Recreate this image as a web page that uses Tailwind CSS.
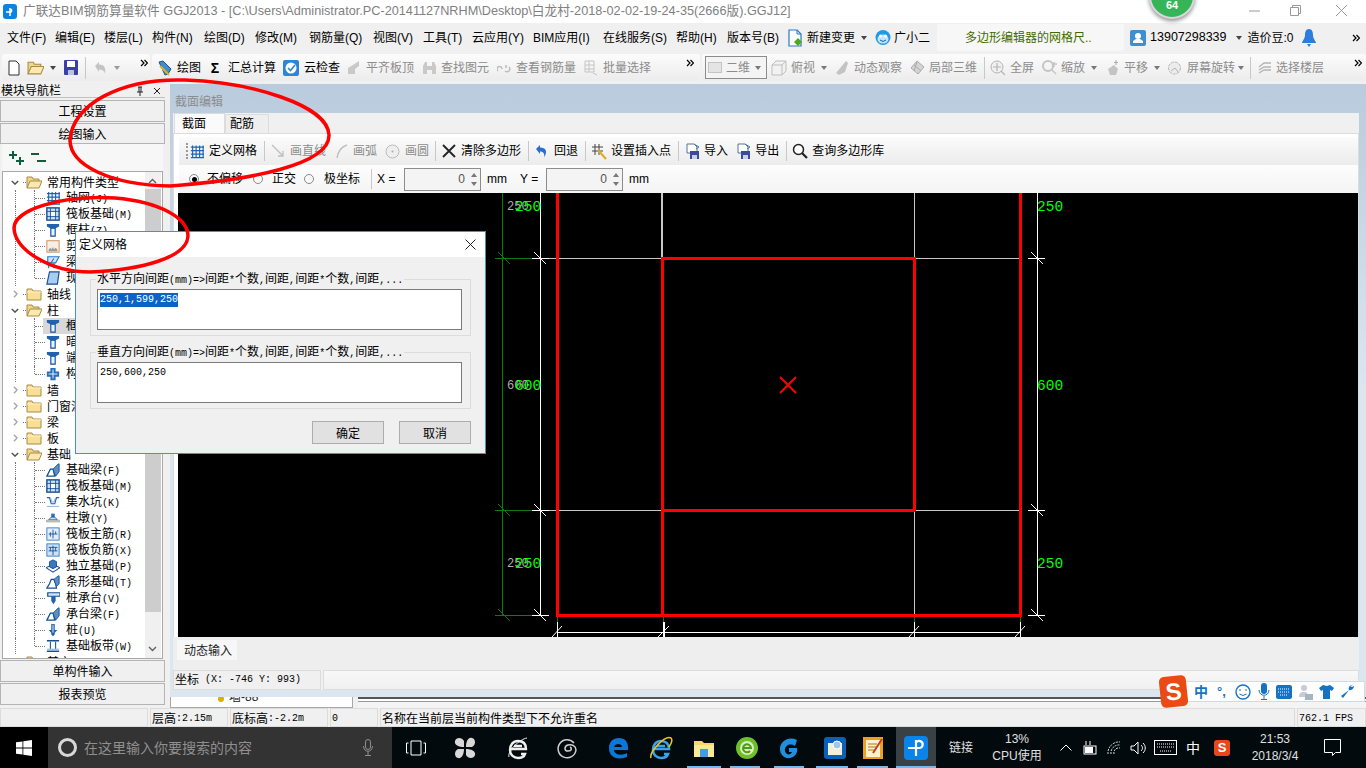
<!DOCTYPE html>
<html lang="zh-CN">
<head>
  <meta charset="UTF-8" />
  <title>广联达BIM钢筋算量软件 GGJ2013</title>
  <script src="https://cdn.jsdelivr.net/npm/@tailwindcss/browser@4"></script>
</head>
<body class="bg-[#f0f0f0] text-black text-[12px] leading-none [font-family:'Liberation_Sans','Noto_Sans_CJK_SC',sans-serif]">

  <!-- shared icons -->
  <svg class="hidden">
    <symbol id="i-grid" viewBox="0 0 16 16"><path d="M3 1v14M7 1v14M11 1v14M15 1v14M1 3h15M1 7h15M1 11h15M1 15h15" stroke="#1f62b0" stroke-width="1.3" fill="none"/></symbol>
    <symbol id="i-raft" viewBox="0 0 16 16"><rect x="1" y="1" width="14" height="14" fill="#cfe0f3" stroke="#134f96" stroke-width="1.6"/><rect x="5" y="5" width="6" height="6" fill="#fff" stroke="#134f96"/><path d="M5 1v4M11 1v4M5 11v4M11 11v4M1 5h4M1 11h4M11 5h4M11 11h4" stroke="#134f96"/></symbol>
    <symbol id="i-col" viewBox="0 0 16 16"><path d="M1 1h14v3l-4 2H5L1 4z" fill="#1f62b0"/><path d="M5.5 6h5v9h-5z" fill="#e6f0fa" stroke="#134f96" stroke-width="1.3"/></symbol>
    <symbol id="i-shear" viewBox="0 0 16 16"><rect x="1" y="2" width="14" height="13" fill="#f6efe6" stroke="#c9864a"/><path d="M3 12l2-2 1 2 2-3 1 3 2-2 2 2v2H3z" fill="#9a9a9a"/></symbol>
    <symbol id="i-beam" viewBox="0 0 16 16"><path d="M2 2h13l-4 7H2z" fill="#cfe3f6" stroke="#2a78c2" stroke-width="1.3"/><path d="M3 9v6M9 9v6M3 13l6-9" stroke="#2a78c2" stroke-width="1.3" fill="none"/></symbol>
    <symbol id="i-slab" viewBox="0 0 16 16"><path d="M4 1h11l-2 14H1z" fill="#a9cdf0" stroke="#134f96" stroke-width="1.3"/></symbol>
    <symbol id="i-ctor" viewBox="0 0 16 16"><path d="M5 1h6v4h4v6h-4v4H5v-4H1V5h4z" fill="#2a6fbe"/><path d="M8 3v10M3 8h10" stroke="#fff"/></symbol>
    <symbol id="i-fbeam" viewBox="0 0 16 16"><path d="M1 15l4-8h3l2 8z" fill="#fff" stroke="#134f96" stroke-width="1.4"/><path d="M8 7l6-6h1v9l-4 5z" fill="#5b8fc8" stroke="#134f96"/></symbol>
    <symbol id="i-pit" viewBox="0 0 16 16"><path d="M1 3h3l2 7h4l2-7h3" fill="none" stroke="#1f62b0" stroke-width="1.3"/><path d="M1 13h14M5 3l2 5h2l2-5" stroke="#7aa7d8" fill="none"/></symbol>
    <symbol id="i-pier" viewBox="0 0 16 16"><path d="M6 3h4v4H6z" fill="#2a6fbe"/><path d="M3 10l3-3h4l3 3z" fill="#cfe0f3" stroke="#134f96"/><rect x="0" y="10" width="16" height="3" fill="#b8b8b8"/></symbol>
    <symbol id="i-main" viewBox="0 0 16 16"><rect x="1" y="1" width="14" height="14" fill="#e3eefa" stroke="#2a78c2"/><path d="M8 3v10M3 8h10M5 6v5M11 5v3" stroke="#134f96" fill="none"/></symbol>
    <symbol id="i-neg" viewBox="0 0 16 16"><rect x="1" y="1" width="14" height="14" fill="#cfe0f3" stroke="#2a78c2"/><path d="M3 5h10M3 9h10M8 3v11M5 5v4M11 5v4" stroke="#134f96" fill="none"/></symbol>
    <symbol id="i-ind" viewBox="0 0 16 16"><path d="M0 10l8-4 8 4-8 5z" fill="#fff" stroke="#134f96" stroke-width="1.2"/><path d="M4 3l4-2 4 2v6l-4 2-4-2z" fill="#3b78c0" stroke="#134f96"/></symbol>
    <symbol id="i-strip" viewBox="0 0 16 16"><path d="M1 15l3-5 2-5h3l2 5 1 5z" fill="#fff" stroke="#134f96" stroke-width="1.4"/><path d="M9 5l5-4h1v9l-3 3z" fill="#5b8fc8" stroke="#134f96"/></symbol>
    <symbol id="i-cap" viewBox="0 0 16 16"><path d="M2 2h14v4H2z" fill="#d5e4f4" stroke="#134f96" stroke-width="1.4"/><path d="M6 6h5v5l-2.500 4-2.500-4z" fill="#1f62b0"/></symbol>
    <symbol id="i-pile" viewBox="0 0 16 16"><path d="M6 1h4v7h3l-3 3v2l-2 2-2-2v-2L3 8h3z" fill="#1f62b0"/><path d="M8 2v9" stroke="#fff"/></symbol>
    <symbol id="i-band" viewBox="0 0 16 16"><path d="M1 2h14M1 14h14" stroke="#134f96" stroke-width="1.6"/><path d="M5 3v9M11 3v9" stroke="#134f96" stroke-width="1.2"/><path d="M1 11h14v2H1z" fill="#9cc0e6"/></symbol>
    <symbol id="i-dopen" viewBox="0 0 16 14"><path d="M1 13V2h5l1 2h6v2" fill="#f0d58a" stroke="#a98b46"/><path d="M1 13l3-7h12l-3 7z" fill="#fbe9b0" stroke="#a98b46"/></symbol>
    <symbol id="i-dclosed" viewBox="0 0 16 14"><path d="M1 13V2h5l1 2h8v9z" fill="#f9df93" stroke="#a98b46"/><path d="M1 5h14" stroke="#fff4cf"/></symbol>
    <symbol id="i-more" viewBox="0 0 8 8"><path d="M1 1l3 3-3 3M4.500 1l3 3-3 3" stroke="#000" fill="none" stroke-width="1.200"/></symbol>
    <symbol id="i-down" viewBox="0 0 6 4"><path d="M0 0h6L3 4z" fill="#444"/></symbol>
    <symbol id="i-disk" viewBox="0 0 16 16"><path d="M3 1h7l3 3v6H3z" fill="#fff" stroke="#56739a"/><path d="M10 1l5 3-3 2" stroke="#4478b0" fill="none"/><rect x="6" y="8" width="9" height="8" fill="#3b4a9c"/><rect x="8" y="12" width="5" height="4" fill="#c8d2e6"/></symbol>
  </svg>

  <div class="relative w-[1366px] h-[768px] overflow-hidden flex flex-col">

    <!-- title bar -->
    <div class="h-[23px] bg-white flex items-center relative">
      <div class="ml-[3px] w-[14px] h-[15px] rounded-[3px] bg-[#0a84e0] flex items-center justify-center">
        <svg class="w-[10px] h-[10px]" viewBox="0 0 10 10"><path d="M5 1v8M1 5h5a2 2 0 0 0 0-3" stroke="#fff" stroke-width="1.500" fill="none"/></svg>
      </div>
      <span class="ml-[6px] text-[12.700px] text-[#808080] whitespace-nowrap">广联达BIM钢筋算量软件 GGJ2013 - [C:\Users\Administrator.PC-20141127NRHM\Desktop\白龙村-2018-02-02-19-24-35(2666版).GGJ12]</span>
      <svg class="absolute left-[1249px] top-[10px] w-[11px] h-[2px]" viewBox="0 0 11 2"><path d="M0 1h11" stroke="#999"/></svg>
      <svg class="absolute left-[1290px] top-[5px] w-[11px] h-[11px]" viewBox="0 0 11 11"><path d="M.5 2.500h8v8h-8zM2.500 2.500v-2h8v8h-2" stroke="#999" fill="none"/></svg>
      <svg class="absolute left-[1336px] top-[5px] w-[11px] h-[11px]" viewBox="0 0 11 11"><path d="M0 0l11 11M11 0L0 11" stroke="#999"/></svg>
    </div>

    <!-- menu bar -->
    <div class="h-[29px] bg-[#f0f0f0] flex items-center whitespace-nowrap pl-[7px]">
      <span class="w-[48px]">文件(F)</span><span class="w-[49px]">编辑(E)</span><span class="w-[48px]">楼层(L)</span><span class="w-[52px]">构件(N)</span><span class="w-[51px]">绘图(D)</span><span class="w-[54px]">修改(M)</span><span class="w-[64px]">钢筋量(Q)</span><span class="w-[50px]">视图(V)</span><span class="w-[49px]">工具(T)</span><span class="w-[61px]">云应用(Y)</span><span class="w-[70px]">BIM应用(I)</span><span class="w-[73px]">在线服务(S)</span><span class="w-[51px]">帮助(H)</span><span class="w-[60px]">版本号(B)</span>
      <svg class="w-4 h-[18px]" viewBox="0 0 16 18"><path d="M2 1h8l4 4v12H2z" fill="#fff" stroke="#2a78c2" stroke-width="1.200"/><path d="M10 1v4h4" fill="none" stroke="#2a78c2"/><path d="M11 9l4 4-4 4-4-4z" fill="#4ea81f"/></svg>
      <span class="ml-1">新建变更</span>
      <svg class="ml-[6px] w-[6px] h-1"><use href="#i-down"/></svg>
      <svg class="ml-2 w-4 h-4" viewBox="0 0 16 16"><circle cx="8" cy="7.500" r="7.500" fill="#1e9be8"/><ellipse cx="8" cy="9" rx="5.500" ry="4.500" fill="#bfe6fb"/><circle cx="5.500" cy="6" r="1.500" fill="#fff"/><circle cx="10.500" cy="6" r="1.500" fill="#fff"/><path d="M5 10q3 3 6 0" stroke="#0a5fa8" fill="none"/></svg>
      <span class="ml-[3px]">广小二</span>
      <div class="ml-[7px] w-[187px] h-[27px] bg-[#f7f7f7] rounded-[3px] flex items-center pl-[28px] text-[#3f6b00]">多边形编辑器的网格尺..</div>
      <svg class="ml-[6px] w-4 h-4" viewBox="0 0 16 16"><rect width="16" height="16" rx="2" fill="#3c8fd0"/><circle cx="8" cy="6" r="3" fill="#fff"/><path d="M3 13h10v-2l-3-2H6l-3 2z" fill="#fff"/></svg>
      <span class="ml-1 text-[12.500px]">13907298339</span>
      <svg class="ml-[9px] w-[6px] h-1"><use href="#i-down"/></svg>
      <span class="ml-[6px]">造价豆:0</span>
      <svg class="ml-[8px] w-[14px] h-[18px]" viewBox="0 0 14 18"><path d="M7 0c3 0 4 3 4 6 0 4 3 6 3 8H0c0-2 3-4 3-8 0-3 1-6 4-6z" fill="#2b7de0"/><path d="M5 15h4l-2 3z" fill="#2b7de0"/></svg>
      <svg class="ml-[36px] w-2 h-2"><use href="#i-more"/></svg>
    </div>

    <!-- toolbars -->
    <div class="h-[32px] bg-[#f0f0f0] flex items-start pt-[2px] whitespace-nowrap">
      <div class="ml-[2px] w-[148px] h-[27px] flex items-center bg-gradient-to-b from-[#fcfcfc] to-[#ececec] rounded-[3px]">
        <svg class="ml-[5px] w-[14px] h-[16px]" viewBox="0 0 14 16"><path d="M2 1h7l3 3v11H2z" fill="#fff" stroke="#333"/></svg>
        <svg class="ml-[6px] w-[17px] h-[15px]"><use href="#i-dopen"/></svg>
        <svg class="ml-[6px] w-[6px] h-1"><use href="#i-down"/></svg>
        <svg class="ml-2 w-[14px] h-[15px]" viewBox="0 0 14 15"><rect width="14" height="15" rx="1" fill="#3a3fa8"/><rect x="3" y="1" width="8" height="6" fill="#fff"/><rect x="4" y="10" width="6" height="5" fill="#b8c4e0"/></svg>
        <div class="ml-[7px] w-px h-[22px] bg-[#c8c8c8]"></div>
        <svg class="ml-[7px] w-[14px] h-[15px]" viewBox="0 0 14 15"><path d="M2 6l4-4v2.500c5 0 7 3 6 9-1-3-3-4-6-4V12z" fill="#c4c4c4"/></svg>
        <svg class="ml-[7px] w-[6px] h-1 opacity-50"><use href="#i-down"/></svg>
        <svg class="ml-[20px] -mt-[10px] w-2 h-2"><use href="#i-more"/></svg>
      </div>
      <div class="ml-[2px] w-[548px] h-[27px] flex items-center bg-gradient-to-b from-[#fcfcfc] to-[#ececec] rounded-[3px]">
        <svg class="ml-[6px] w-[14px] h-[16px]" viewBox="0 0 14 16"><path d="M1 2l4-1 8 8-3 5-3 1z" fill="#3c8fd0" stroke="#1c4f8c"/><path d="M2 6l9 9" stroke="#e8b020" stroke-width="2"/></svg>
        <span class="ml-[5px]">绘图</span>
        <span class="ml-[7px] w-[14px] text-center text-[14px] font-bold">Σ</span>
        <span class="ml-[6px]">汇总计算</span>
        <svg class="ml-[7px] w-4 h-4" viewBox="0 0 16 16"><rect width="16" height="16" rx="2" fill="#2a86d6"/><circle cx="8" cy="8" r="5.500" fill="#fff"/><path d="M5 8l2.500 2.500L12 5" stroke="#2a86d6" stroke-width="1.600" fill="none"/></svg>
        <span class="ml-[5px]">云检查</span>
        <svg class="ml-[7px] w-[14px] h-[16px]" viewBox="0 0 14 16"><path d="M1 14V8l5-3 6-4v5l-4 3v5z" fill="#c9c9c9"/></svg>
        <span class="ml-[5px] text-[#8c8c8c]">平齐板顶</span>
        <svg class="ml-2 w-[15px] h-[14px]" viewBox="0 0 15 14"><path d="M1 13V5l2-4h2v12zM14 13V5l-2-4h-2v12zM5 5h5v4H5z" fill="#c9c9c9"/></svg>
        <span class="ml-1 text-[#8c8c8c]">查找图元</span>
        <svg class="ml-2 w-[14px] h-[10px]" viewBox="0 0 14 10"><path d="M1 8a2.500 2.500 0 1 1 4-2M9 2v3m-1 3a2.500 2.500 0 1 0 4-4" stroke="#bdbdbd" stroke-width="1.500" fill="none"/></svg>
        <span class="ml-[5px] text-[#8c8c8c]">查看钢筋量</span>
        <svg class="ml-2 w-[14px] h-[16px]" viewBox="0 0 14 16"><path d="M1 1h9v11H1zM1 5h9M1 9h9M5 1v11M9 13l4 2" stroke="#c4c4c4" fill="none"/></svg>
        <span class="ml-[5px] text-[#8c8c8c]">批量选择</span>
        <svg class="ml-[35px] -mt-[10px] w-2 h-2"><use href="#i-more"/></svg>
      </div>
      <div class="ml-[2px] w-[664px] h-[27px] flex items-center bg-gradient-to-b from-[#fcfcfc] to-[#ececec] rounded-[3px]">
        <div class="ml-[3px] w-[62px] h-[23px] border border-[#8c8c8c] flex items-center bg-[#f4f4f4]">
          <span class="ml-[2px] w-[14px] h-[11px] bg-[#e4e4e4] border border-[#c4c4c4]"></span>
          <span class="ml-[4px] text-[#8c8c8c]">二维</span>
          <svg class="ml-[5px] w-[6px] h-1 opacity-70"><use href="#i-down"/></svg>
        </div>
        <svg class="ml-1 w-4 h-4" viewBox="0 0 16 16"><path d="M1 5l4-4h10v10l-4 4H1zM1 5h10v10M11 5l4-4" stroke="#bdbdbd" fill="#f2f2f2"/></svg>
        <span class="ml-1 text-[#8c8c8c]">俯视</span>
        <svg class="ml-[6px] w-[6px] h-1 opacity-70"><use href="#i-down"/></svg>
        <svg class="ml-2 w-[14px] h-4" viewBox="0 0 14 16"><path d="M1 13L11 1l2 2-3 9-6 3z" fill="#c4c4c4"/></svg>
        <span class="ml-[5px] text-[#8c8c8c]">动态观察</span>
        <svg class="ml-2 w-[15px] h-[15px]" viewBox="0 0 15 15"><path d="M1 8l6-7 7 6-6 7z" fill="#d4d4d4" stroke="#aaa"/><path d="M4 5l7 6M7 2l-3 9" stroke="#aaa"/></svg>
        <span class="ml-1 text-[#8c8c8c]">局部三维</span>
        <div class="ml-[7px] w-px h-[22px] bg-[#c8c8c8]"></div>
        <svg class="ml-[5px] w-4 h-4" viewBox="0 0 16 16"><circle cx="7" cy="7" r="6" fill="#f0f0f0" stroke="#b4b4b4"/><path d="M7 3v8M3 7h8M11 11l4 4" stroke="#b4b4b4" stroke-width="1.200"/></svg>
        <span class="ml-1 text-[#8c8c8c]">全屏</span>
        <svg class="ml-2 w-[15px] h-[15px]" viewBox="0 0 15 15"><circle cx="6" cy="6" r="5" fill="none" stroke="#c4c4c4" stroke-width="2"/><path d="M10 10l4 4M12 2v5M10 4h5" stroke="#c4c4c4" stroke-width="1.400"/></svg>
        <span class="ml-1 text-[#8c8c8c]">缩放</span>
        <svg class="ml-[6px] w-[6px] h-1 opacity-70"><use href="#i-down"/></svg>
        <svg class="ml-2 w-[15px] h-4" viewBox="0 0 15 16"><path d="M3 9l6-4 4 4-2 6H5z" fill="#c4c4c4"/><path d="M11 0v5M9 2.500h4" stroke="#aaa"/></svg>
        <span class="ml-1 text-[#8c8c8c]">平移</span>
        <svg class="ml-[6px] w-[6px] h-1 opacity-70"><use href="#i-down"/></svg>
        <svg class="ml-[7px] w-[15px] h-4" viewBox="0 0 15 16"><circle cx="7.500" cy="8" r="6" fill="#ececec" stroke="#b4b4b4" stroke-dasharray="3 1"/><path d="M4 11l4-3 3 4" stroke="#b4b4b4" fill="none"/></svg>
        <span class="ml-[5px] text-[#8c8c8c]">屏幕旋转</span>
        <svg class="ml-[3px] w-[6px] h-1 opacity-70"><use href="#i-down"/></svg>
        <div class="ml-[6px] w-px h-[22px] bg-[#c8c8c8]"></div>
        <svg class="ml-[7px] w-[14px] h-[14px]" viewBox="0 0 14 14"><path d="M1 6l5-4h7M1 9l5-3h7M1 12l5-3h7" stroke="#b4b4b4" stroke-width="1.400" fill="none"/></svg>
        <span class="ml-1 text-[#8c8c8c]">选择楼层</span>
        <svg class="ml-[30px] -mt-[10px] w-2 h-2"><use href="#i-more"/></svg>
      </div>
    </div>

    <!-- main -->
    <div class="h-[624px] flex">

      <!-- module navigation -->
      <div class="w-[165px] shrink-0 flex flex-col bg-[#f0f0f0]">
        <div class="h-[14px] flex items-center justify-between pr-[4px] border-b border-[#c0c0c0] text-[12px]">
          <span class="pl-px">模块导航栏</span>
          <span class="flex items-center gap-[8px]">
            <svg class="w-[10px] h-[10px]" viewBox="0 0 10 10"><path d="M3 1h4M4 1v5M6 1v5M2 6h6M5 6v4" stroke="#222" fill="none"/></svg>
            <svg class="w-[8px] h-[8px]" viewBox="0 0 8 8"><path d="M1 1l6 6M7 1L1 7" stroke="#222"/></svg>
          </span>
        </div>
        <div class="mt-[2px] h-[22px] border border-[#b4b4b4] flex items-center justify-center pt-[2px]">工程设置</div>
        <div class="mt-px h-[21px] border border-[#b4b4b4] flex items-center justify-center pt-[2px]">绘图输入</div>
        <div class="mx-[2px] h-[27px] bg-[#f7f7f7] flex items-center">
          <svg class="ml-[6px] w-[16px] h-[14px]" viewBox="0 0 16 14"><path d="M4 0h2v3h3v2H6v3H4V5H1V3h3zM11 6h2v3h3v2h-3v3h-2v-3H8V9h3z" fill="#0f5f3c"/></svg>
          <svg class="ml-[6px] w-[16px] h-[11px]" viewBox="0 0 16 11"><path d="M1 1h8v2H1zM7 8h9v2H7z" fill="#0f5f3c"/></svg>
        </div>
        <div class="relative mx-[2px] h-[488px] border border-[#a8a8a8] bg-white overflow-hidden">
          <div id="tree" class="pt-[2px]"></div>
          <div class="absolute right-px top-0 bottom-0 w-[16px] bg-[#f0f0f0]">
            <svg class="absolute left-[3px] top-[6px] w-[9px] h-[6px]" viewBox="0 0 9 6"><path d="M1 5l3.500-3.500L8 5" stroke="#606060" stroke-width="1.400" fill="none"/></svg>
            <div class="absolute left-0 right-0 top-[17px] h-[423px] bg-[#cdcdcd]"></div>
            <svg class="absolute left-[3px] bottom-[6px] w-[9px] h-[6px]" viewBox="0 0 9 6"><path d="M1 1l3.500 3.500L8 1" stroke="#606060" stroke-width="1.400" fill="none"/></svg>
          </div>
        </div>
        <div class="mt-px h-[22px] border border-[#b4b4b4] flex items-center justify-center pt-px">单构件输入</div>
        <div class="mt-px h-[22px] border border-[#b4b4b4] flex items-center justify-center pt-px">报表预览</div>
      </div>

      <!-- section editor window -->
      <div class="flex-1 flex flex-col">
        <div class="ml-[5px] h-[613px] flex flex-col bg-gradient-to-b from-[#b9cbdd] via-[#dbe6f1] to-[#dbe6f1]">
          <div class="h-[29px] flex items-center pl-[5px] pt-[6px] text-[#8c8c8c] shrink-0">截面编辑</div>
          <div class="ml-[3px] mr-[9px] h-[577px] bg-[#f0f0f0] flex flex-col shrink-0">
            <div class="h-[20px] flex items-end pl-px shrink-0">
              <div class="w-[51px] h-[20px] bg-[#fafafa] border border-b-0 border-[#dcdcdc] flex items-center pl-[7px]">截面</div>
              <div class="w-[44px] h-[19px] bg-[#eeeeee] border border-b-0 border-[#dcdcdc] flex items-center pl-[4px]">配筋</div>
            </div>
            <div class="h-[505px] bg-white border border-[#dcdcdc] pt-[3px] flex flex-col shrink-0">
              <!-- polygon tools -->
              <div class="h-[28px] flex items-center whitespace-nowrap bg-gradient-to-b from-[#fbfbfb] to-[#ececec] shrink-0 ml-[5px]">
                <span class="ml-[7px] h-[16px] w-[2px] border-l-2 border-dotted border-[#9a9a9a]"></span>
                <svg class="ml-[2px] w-[14px] h-[15px]"><use href="#i-grid"/></svg>
                <span class="ml-[5px]">定义网格</span>
                <div class="ml-[7px] w-px h-[20px] bg-[#c8c8c8]"></div>
                <svg class="ml-[6px] w-[14px] h-[14px]" viewBox="0 0 14 14"><path d="M1 1l11 11M12 7v5H7" stroke="#bdbdbd" stroke-width="1.300" fill="none"/></svg>
                <span class="ml-[5px] text-[#8c8c8c]">画直线</span>
                <svg class="ml-[9px] w-[13px] h-[15px]" viewBox="0 0 13 15"><path d="M2 14C3 7 6 3 12 1" stroke="#bdbdbd" stroke-width="1.400" fill="none"/></svg>
                <span class="ml-[5px] text-[#8c8c8c]">画弧</span>
                <svg class="ml-[8px] w-[15px] h-[15px]" viewBox="0 0 15 15"><circle cx="7.500" cy="7.500" r="6.500" fill="#eee" stroke="#bdbdbd"/><circle cx="7.500" cy="7.500" r="1" fill="#aaa"/></svg>
                <span class="ml-[5px] text-[#8c8c8c]">画圆</span>
                <div class="ml-[6px] w-px h-[20px] bg-[#c8c8c8]"></div>
                <svg class="ml-[6px] w-[14px] h-[14px]" viewBox="0 0 14 14"><path d="M1 1l12 12M13 1L1 13" stroke="#222" stroke-width="1.800"/></svg>
                <span class="ml-[5px]">清除多边形</span>
                <div class="ml-[7px] w-px h-[20px] bg-[#c8c8c8]"></div>
                <svg class="ml-[6px] w-[14px] h-[14px]" viewBox="0 0 14 14"><path d="M1 5l4-4v2.500c6 0 8 4 4 10 1-4-1-6-4-6V10z" fill="#2a6fd0"/></svg>
                <span class="ml-[5px]">回退</span>
                <div class="ml-[7px] w-px h-[20px] bg-[#c8c8c8]"></div>
                <svg class="ml-[5px] w-[16px] h-[17px]" viewBox="0 0 16 17"><path d="M4 1v11M8 1v11M1 4h11M1 8h11" stroke="#444" fill="none"/><path d="M7 7l8 9" stroke="#e2a820" stroke-width="2"/></svg>
                <span class="ml-[4px]">设置插入点</span>
                <div class="ml-[7px] w-px h-[20px] bg-[#c8c8c8]"></div>
                <svg class="ml-[5px] w-[16px] h-[16px]"><use href="#i-disk"/></svg>
                <span class="ml-[4px]">导入</span>
                <svg class="ml-[7px] w-[16px] h-[16px]"><use href="#i-disk"/></svg>
                <span class="ml-[4px]">导出</span>
                <div class="ml-[7px] w-px h-[20px] bg-[#c8c8c8]"></div>
                <svg class="ml-[5px] w-[16px] h-[16px]" viewBox="0 0 16 16"><circle cx="6.500" cy="6.500" r="5" fill="#fff" stroke="#222" stroke-width="1.500"/><path d="M10 10l5 5" stroke="#222" stroke-width="2.200"/></svg>
                <span class="ml-[4px]">查询多边形库</span>
              </div>
              <!-- offset mode row -->
              <div class="h-[28px] flex items-center whitespace-nowrap bg-gradient-to-b from-[#fdfdfd] to-[#f4f4f4] shrink-0 ml-[5px]">
                <span class="ml-[10px] w-[10px] h-[10px] rounded-full border border-[#8a8a8a] flex items-center justify-center"><span class="w-[5px] h-[5px] rounded-full bg-black"></span></span>
                <span class="ml-[8px]">不偏移</span>
                <span class="ml-[10px] w-[10px] h-[10px] rounded-full border border-[#8a8a8a]"></span>
                <span class="ml-[9px]">正交</span>
                <span class="ml-[8px] w-[10px] h-[10px] rounded-full border border-[#8a8a8a]"></span>
                <span class="ml-[10px]">极坐标</span>
                <div class="ml-[11px] w-px h-[20px] bg-[#c8c8c8]"></div>
                <span class="ml-[5px] w-[27px]">X =</span>
                <div class="w-[77px] h-[23px] border border-[#8c8c8c] bg-[#f4f4f4] flex items-center justify-end">
                  <span class="text-[#555]">0</span>
                  <span class="ml-[6px] mr-[3px] flex flex-col gap-[5px]">
                    <svg class="w-[6px] h-1 rotate-180 opacity-70"><use href="#i-down"/></svg>
                    <svg class="w-[6px] h-1 opacity-70"><use href="#i-down"/></svg>
                  </span>
                </div>
                <span class="ml-[6px]">mm</span>
                <span class="ml-[13px] w-[26px]">Y =</span>
                <div class="w-[77px] h-[23px] border border-[#8c8c8c] bg-[#f4f4f4] flex items-center justify-end">
                  <span class="text-[#555]">0</span>
                  <span class="ml-[6px] mr-[3px] flex flex-col gap-[5px]">
                    <svg class="w-[6px] h-1 rotate-180 opacity-70"><use href="#i-down"/></svg>
                    <svg class="w-[6px] h-1 opacity-70"><use href="#i-down"/></svg>
                  </span>
                </div>
                <span class="ml-[6px]">mm</span>
              </div>
              <!-- CAD canvas, viewBox uses page coordinates -->
              <svg class="ml-[4px] w-[1180px] h-[444px] bg-black shrink-0" viewBox="178 193 1180 444" shape-rendering="crispEdges">
                <path d="M502.500 193v422M495 258.500h38M495 510.500h38M495 615.500h38" stroke="#0c7a0c"/>
                <path d="M540.500 193v422M532 258.500h17M532 510.500h17M532 615.500h17M1037.500 193v422M1028 258.500h17M1028 510.500h17M1028 615.500h17M557 632.500h464" stroke="#fff"/>
                <path d="M549 258.500h473M549 510.500h473" stroke="#c8c8c8"/>
                <path d="M662 193v65" stroke="#c8c8c8" stroke-width="2"/>
                <path d="M914.500 193v65M914.500 510v105" stroke="#c8c8c8"/>
                <path d="M557.500 617v5M663.500 617v5M914.500 617v5M1020.500 617v5" stroke="#0c7a0c"/>
                <path d="M557.500 622v15M914.500 622v15M1020.500 622v15" stroke="#fff"/>
                <path d="M663.500 622v15" stroke="#fff" stroke-width="2"/>
                <g shape-rendering="auto" stroke="#fff" fill="none">
                  <path d="M534 252l12 12M534 504l12 12M534 609l12 12M1031 252l12 12M1031 504l12 12M1031 609l12 12"/>
                  <path d="M552 637l10-11M658 637l11-11M909 637l10-11M1015 637l10-11"/>
                  <path d="M498 252l12 12M498 504l12 12M498 609l12 12" stroke="#0c7a0c"/>
                </g>
                <path d="M557.500 193v422M1020.500 193v422M556 615.500h466M662.500 258.500h252M914 257v254M662.500 257v358M662 510.500h253" stroke="#ff0000" stroke-width="3" fill="none"/>
                <path d="M780 377l16 16M796 377l-16 16" stroke="#ff0000" stroke-width="2" fill="none" shape-rendering="auto"/>
                <g font-family="Liberation Mono, monospace" shape-rendering="auto">
                  <text x="507" y="210" font-size="12" fill="#b0b0b0">250</text>
                  <text x="507" y="389" font-size="12" fill="#b0b0b0">600</text>
                  <text x="507" y="567" font-size="12" fill="#b0b0b0">250</text>
                  <text x="515" y="211" font-size="14.500" fill="#00ff00">250</text>
                  <text x="515" y="390" font-size="14.500" fill="#00ff00">600</text>
                  <text x="515" y="568" font-size="14.500" fill="#00ff00">250</text>
                  <text x="1037" y="211" font-size="14.500" fill="#00ff00">250</text>
                  <text x="1037" y="390" font-size="14.500" fill="#00ff00">600</text>
                  <text x="1037" y="568" font-size="14.500" fill="#00ff00">250</text>
                </g>
              </svg>
            </div>
            <!-- dynamic input tab -->
            <div class="h-[33px] bg-[#eeeeee] shrink-0 pt-[3px] pl-[4px] relative -mt-px">
              <div class="w-[60px] h-[20px] bg-[#f7f7f7] flex items-center pl-[7px] pt-[2px] text-[#222]">动态输入</div>
            </div>
            <!-- coordinates -->
            <div class="h-[20px] flex shrink-0 bg-[#f0f0f0] gap-[2px]">
              <div class="w-[148px] border border-[#dcdcdc] flex items-center pl-px whitespace-nowrap">坐标<span class="[font-family:'Liberation_Mono',monospace] text-[10px]">&nbsp;(X:&nbsp;-746&nbsp;Y:&nbsp;993)</span></div>
              <div class="flex-1 border border-[#dcdcdc] bg-gradient-to-b from-[#f8f8f8] to-[#f0f0f0]"></div>
            </div>
          </div>
        </div>
        <!-- panels behind the window -->
        <div class="h-[11px] flex bg-[#f0f0f0]">
          <div class="ml-[5px] w-[183px] bg-white border-x border-b border-[#a8a8a8] flex items-start pl-[45px] overflow-hidden">
            <svg class="w-[10px] h-[6px]" viewBox="0 0 10 6"><circle cx="5" cy="2" r="3" fill="#d8b000"/></svg>
            <span class="ml-[3px] -mt-[6px] text-[#222]">墙-88</span>
          </div>
          <div class="ml-[5px] flex-1 border-t-2 border-[#555] bg-white mt-0">
            <div class="mt-[2px] border-t border-[#999] h-[7px] bg-[#f4f4f4]"></div>
          </div>
        </div>
      </div>
    </div>

    <!-- status bar -->
    <div class="h-[19px] flex gap-[2px] bg-[#f0f0f0] whitespace-nowrap">
      <div class="w-[148px] border border-[#dcdcdc]"></div>
      <div class="w-[78px] border border-[#dcdcdc] flex items-center pl-px pt-[2px]">层高<span class="[font-family:'Liberation_Mono',monospace] text-[10px]">:2.15m</span></div>
      <div class="w-[98px] border border-[#dcdcdc] flex items-center pl-px pt-[2px]">底标高<span class="[font-family:'Liberation_Mono',monospace] text-[10px]">:-2.2m</span></div>
      <div class="w-[48px] border border-[#dcdcdc] flex items-center pl-px pt-[2px] [font-family:'Liberation_Mono',monospace] text-[10px]">0</div>
      <div class="w-[915px] border border-[#dcdcdc] flex items-center pl-px pt-[2px]">名称在当前层当前构件类型下不允许重名</div>
      <div class="flex-1 border border-[#dcdcdc] flex items-center pl-px pt-[2px] [font-family:'Liberation_Mono',monospace] text-[10px]">762.1 FPS</div>
    </div>

    <!-- taskbar -->
    <div class="relative h-[41px] bg-[#020a0e] flex items-center whitespace-nowrap text-white">
      <div class="w-[48px] h-full bg-black flex items-center justify-center">
        <svg class="w-[16px] h-[16px]" viewBox="0 0 16 16"><path d="M0 2.300l6.500-.9v6.200H0zM7.300 1.300L16 0v7.600H7.300zM0 8.400h6.500v6.200L0 13.700zM7.300 8.400H16V16l-8.700-1.300z" fill="#fff"/></svg>
      </div>
      <div class="w-[344px] h-full bg-[#333333] flex items-center">
        <span class="ml-[10px] w-[19px] h-[19px] rounded-full border-[3px] border-[#d8d8d8]"></span>
        <span class="ml-[7px] text-[14px] text-[#8f8f8f]">在这里输入你要搜索的内容</span>
        <svg class="ml-[111px] w-[10px] h-[17px]" viewBox="0 0 10 17"><rect x="2.500" y=".5" width="5" height="10" rx="2.500" fill="none" stroke="#8f8f8f"/><path d="M.5 7c0 7 9 7 9 0M5 12v4M2 16.500h6" stroke="#8f8f8f" fill="none"/></svg>
      </div>
      <svg class="ml-[14px] w-[20px] h-[16px]" viewBox="0 0 20 16"><path d="M5 1h10v14H5zM2.500 3H.5v10h2M17.500 3h2v10h-2" stroke="#fff" fill="none"/></svg>
      <svg class="ml-[27px] w-[24px] h-[24px]" viewBox="0 0 24 24"><path d="M11 11C6 11 1 9 2 5s7-4 9 0zM13 11c0-5 2-10 6-9s4 7 0 9zM13 13c5 0 10 2 9 6s-7 4-9 0zM11 13c0 5-2 10-6 9s-4-7 0-9z" fill="#d8d8d8"/></svg>
      <svg class="ml-[29px] w-[24px] h-[24px]" viewBox="0 0 24 24"><path d="M5 13h15c0-5-3-8-8-8s-8 4-8 9 4 8 8 8c3 0 6-1 7-4h-4M8 10h8" stroke="#f0f0f0" stroke-width="2.400" fill="none"/><path d="M3 21C1 15 14 3 21 2" stroke="#f0f0f0" fill="none"/></svg>
      <svg class="ml-[25px] w-[24px] h-[24px]" viewBox="0 0 24 24"><path d="M19 7a9 9 0 1 0 2 7c0-4-4-6-8-5s-4 6 0 6 4-3 2-4" stroke="#cfcfcf" stroke-width="1.500" fill="none"/></svg>
      <svg class="ml-[27px] w-[24px] h-[24px]" viewBox="0 0 24 24"><path d="M3 12C3 6 7 2 13 2c6 0 9 4 9 10v2H8c0 5 8 6 13 3v4c-7 3-18 2-18-9zm5-1h8c0-4-7-4-8 0z" fill="#0a78d6"/></svg>
      <svg class="ml-[19px] w-[24px] h-[24px]" viewBox="0 0 24 24"><path d="M5 13h15c0-5-3-8-8-8s-8 4-8 9 4 8 8 8c3 0 6-1 7-4h-4M8 10h8" stroke="#35a4ea" stroke-width="2.600" fill="none"/><path d="M2 22C0 16 16 -1 22 2c2 2 0 6-2 9" stroke="#f2c21a" stroke-width="1.500" fill="none"/></svg>
      <svg class="ml-[19px] w-[24px] h-[24px]" viewBox="0 0 24 24"><path d="M2 5h8l2 2h10v14H2z" fill="#f6d86b"/><path d="M2 9h20v12H2z" fill="#fbe79d"/><rect x="8" y="13" width="8" height="8" fill="#3f9fe0"/></svg>
      <svg class="ml-[19px] w-[24px] h-[24px]" viewBox="0 0 24 24"><circle cx="12" cy="12" r="11" fill="#6fbf2a"/><circle cx="12" cy="12" r="7" fill="#d8f0c0"/><path d="M8 12h8a4 4 0 1 0-1 3" stroke="#4f9a14" stroke-width="2" fill="none"/></svg>
      <svg class="ml-[18px] w-[24px] h-[24px]" viewBox="0 0 24 24"><path d="M20 4C12 0 3 5 3 13c0 6 5 10 10 9 5-1 8-5 7-10h-8v4h3c-1 2-3 3-5 2-3-2-3-7 1-9 3-1 6 0 7 1z" fill="#1f8fe0"/></svg>
      <svg class="ml-[22px] w-[24px] h-[24px]" viewBox="0 0 24 24"><rect x="1" y="1" width="22" height="22" rx="3" fill="#0b60b8"/><rect x="5" y="7" width="14" height="12" fill="#f4f0d8"/><circle cx="14" cy="9" r="4" fill="#9cc8f0" stroke="#fff"/></svg>
      <svg class="ml-[14px] w-[24px] h-[24px]" viewBox="0 0 24 24"><rect x="2" y="1" width="20" height="22" fill="#f0a020"/><rect x="5" y="4" width="14" height="17" fill="#fbf2d0"/><path d="M7 8h9M7 11h9M7 14h6" stroke="#a87a20"/><path d="M12 17L21 3" stroke="#c8401a" stroke-width="2"/></svg>
      <div class="ml-[11px] w-[40px] h-full bg-[#3a4145] flex items-center justify-center">
        <svg class="w-[24px] h-[24px]" viewBox="0 0 24 24"><rect width="24" height="24" rx="4" fill="#0a84e8"/><path d="M12 4v16M4 12h11a3.500 3.500 0 1 0-3-5" stroke="#fff" stroke-width="2.200" fill="none"/></svg>
      </div>
      <span class="ml-[13px] text-[#e0e0e0]">链接</span>
      <div class="ml-[14px] w-[60px] flex flex-col items-center gap-[5px] text-[#e0e0e0]"><span>13%</span><span>CPU使用</span></div>
      <svg class="ml-[13px] w-[12px] h-[7px]" viewBox="0 0 12 7"><path d="M.5 6.500L6 1l5.500 5.500" stroke="#fff" fill="none"/></svg>
      <svg class="ml-[10px] w-[16px] h-[14px]" viewBox="0 0 16 14"><rect x="2" y="5" width="12" height="8" fill="none" stroke="#fff"/><rect x="3" y="6" width="8" height="6" fill="#fff"/><path d="M4 0v4M8 0v4" stroke="#fff"/></svg>
      <svg class="ml-[9px] w-[16px] h-[14px]" viewBox="0 0 16 14"><path d="M1 13a11 11 0 0 1 12-12M4 13a8 8 0 0 1 9-9M7 13a5 5 0 0 1 6-6" stroke="#ddd" stroke-dasharray="2 1" fill="none"/></svg>
      <svg class="ml-[7px] w-[16px] h-[14px]" viewBox="0 0 16 14"><path d="M1 5h3l4-4v12L4 9H1zM11 4c2 2 2 4 0 6M13 2c3 3 3 7 0 10" stroke="#fff" fill="none"/></svg>
      <svg class="ml-[8px] w-[23px] h-[15px]" viewBox="0 0 23 15"><rect x=".5" y=".5" width="22" height="14" fill="none" stroke="#fff"/><path d="M3 4h17M3 7h17M6 11h11" stroke="#fff" stroke-dasharray="1 1"/></svg>
      <span class="ml-[9px] w-[14px] text-[14px]">中</span>
      <div class="ml-[14px] w-[16px] h-[16px] bg-[#e8481c] rounded-[3px] flex items-center justify-center text-[13px] font-bold">S</div>
      <div class="ml-[15px] w-[60px] flex flex-col items-center gap-[5px] text-[#e0e0e0]"><span>21:53</span><span>2018/3/4</span></div>
      <svg class="ml-[19px] w-[17px] h-[17px]" viewBox="0 0 17 17"><path d="M.5.5h16v13h-5l-3 3v-3H.5z" fill="none" stroke="#fff"/></svg>
      <!-- running-app underlines -->
      <div class="absolute left-[687px] bottom-0 w-[34px] h-[2px] bg-[#76b9ed]"></div>
      <div class="absolute left-[730px] bottom-0 w-[30px] h-[2px] bg-[#76b9ed]"></div>
      <div class="absolute left-[774px] bottom-0 w-[30px] h-[2px] bg-[#76b9ed]"></div>
      <div class="absolute left-[816px] bottom-0 w-[32px] h-[2px] bg-[#76b9ed]"></div>
      <div class="absolute left-[857px] bottom-0 w-[31px] h-[2px] bg-[#76b9ed]"></div>
      <div class="absolute left-[896px] bottom-0 w-[40px] h-[2px] bg-[#76b9ed]"></div>
    </div>

    <!-- define-grid dialog -->
    <div class="absolute left-[75px] top-[231px] w-[411px] h-[223px] border border-[#4a90d0] bg-[#f0f0f0]">
      <div class="h-[25px] bg-white flex items-center justify-between pl-[3px] pr-[9px]">
        <span>定义网格</span>
        <svg class="w-[11px] h-[11px]" viewBox="0 0 11 11"><path d="M.5.5l10 10M10.500.5l-10 10" stroke="#222"/></svg>
      </div>
      <div class="relative mt-[22px] ml-[14px] mr-[14px] h-[57px] border border-[#dcdcdc]">
        <span class="absolute -top-[7px] left-[5px] px-px bg-[#f0f0f0] whitespace-nowrap">水平方向间距<span class="[font-family:'Liberation_Mono',monospace] text-[10px]">(mm)=&gt;</span>间距<span class="[font-family:'Liberation_Mono',monospace] text-[10px]">*</span>个数<span class="[font-family:'Liberation_Mono',monospace] text-[10px]">,</span>间距<span class="[font-family:'Liberation_Mono',monospace] text-[10px]">,</span>间距<span class="[font-family:'Liberation_Mono',monospace] text-[10px]">*</span>个数<span class="[font-family:'Liberation_Mono',monospace] text-[10px]">,</span>间距<span class="[font-family:'Liberation_Mono',monospace] text-[10px]">,...</span></span>
        <div class="mt-[9px] ml-[6px] w-[365px] h-[41px] border border-[#7a7a7a] bg-white pl-[2px] pt-[2px]">
          <span class="inline-block bg-[#0a64c8] text-white h-[14px] leading-[14px] [font-family:'Liberation_Mono',monospace] text-[10px]">250,1,599,250</span>
        </div>
      </div>
      <div class="relative mt-[16px] ml-[14px] mr-[14px] h-[57px] border border-[#dcdcdc]">
        <span class="absolute -top-[7px] left-[5px] px-px bg-[#f0f0f0] whitespace-nowrap">垂直方向间距<span class="[font-family:'Liberation_Mono',monospace] text-[10px]">(mm)=&gt;</span>间距<span class="[font-family:'Liberation_Mono',monospace] text-[10px]">*</span>个数<span class="[font-family:'Liberation_Mono',monospace] text-[10px]">,</span>间距<span class="[font-family:'Liberation_Mono',monospace] text-[10px]">,</span>间距<span class="[font-family:'Liberation_Mono',monospace] text-[10px]">*</span>个数<span class="[font-family:'Liberation_Mono',monospace] text-[10px]">,</span>间距<span class="[font-family:'Liberation_Mono',monospace] text-[10px]">,...</span></span>
        <div class="mt-[9px] ml-[6px] w-[365px] h-[41px] border border-[#7a7a7a] bg-white pl-[2px] pt-[2px]">
          <span class="inline-block h-[14px] leading-[14px] [font-family:'Liberation_Mono',monospace] text-[10px]">250,600,250</span>
        </div>
      </div>
      <div class="mt-[12px] flex justify-end gap-[15px] pr-[14px]">
        <div class="w-[72px] h-[23px] bg-[#e1e1e1] border border-[#adadad] flex items-center justify-center pt-[2px]">确定</div>
        <div class="w-[72px] h-[23px] bg-[#e1e1e1] border border-[#adadad] flex items-center justify-center pt-[2px]">取消</div>
      </div>
    </div>

    <!-- update badge -->
    <div class="absolute left-[1149px] -top-[27px] w-[46px] h-[46px] rounded-full bg-[#35b558] border-2 border-[#d8d8d8] shadow-[0_2px_4px_rgba(0,0,0,0.45)] flex items-end justify-center pb-[6px] text-white text-[11px] font-bold">64</div>

    <!-- sogou IME bar -->
    <div class="absolute left-[1183px] top-[681px] w-[182px] h-[21px] bg-white border border-[#cfdbe6] flex items-center text-[#1673c4]">
      <span class="ml-[10px] text-[14px] font-bold w-[14px]">中</span>
      <span class="ml-[9px] text-[13px] font-bold w-[14px]">°,</span>
      <svg class="ml-[4px] w-[16px] h-[16px]" viewBox="0 0 16 16"><circle cx="8" cy="8" r="7" fill="none" stroke="#1673c4" stroke-width="1.400"/><path d="M5 5v2M11 5v2M4.500 10q3.500 3 7 0" stroke="#1673c4" fill="none"/></svg>
      <svg class="ml-[7px] w-[12px] h-[17px]" viewBox="0 0 12 17"><rect x="3" y="0" width="6" height="11" rx="3" fill="#1673c4"/><path d="M1 7c0 7 10 7 10 0M6 13v3M3 16.500h6" stroke="#1673c4" fill="none"/></svg>
      <svg class="ml-[6px] w-[16px] h-[14px]" viewBox="0 0 16 14"><rect width="16" height="14" rx="2" fill="#1673c4"/><path d="M2 4h12M2 7h12M4 10h8" stroke="#fff" stroke-dasharray="1 1"/></svg>
      <svg class="ml-[6px] w-[15px] h-[16px]" viewBox="0 0 15 16"><circle cx="6" cy="4" r="3" fill="#c4ccd4"/><path d="M1 13c0-4 2-5 5-5s4 1 4 5z" fill="#c4ccd4"/><rect x="7" y="10" width="8" height="6" fill="#aab4bc"/></svg>
      <svg class="ml-[6px] w-[15px] h-[15px]" viewBox="0 0 15 15"><path d="M4 1L0 4l2 3 2-1v9h7V6l2 1 2-3-4-3-3 1z" fill="#1673c4"/></svg>
      <svg class="ml-[6px] w-[14px] h-[15px]" viewBox="0 0 14 15"><path d="M13 1c-3 0-5 2-4 5L1 12l2 2 6-8c3 1 5-2 5-4l-2 1-2-1z" fill="#1673c4"/></svg>
    </div>
    <div class="absolute left-[1160px] top-[676px] w-[27px] h-[31px] bg-[#ea4a14] rounded-[5px] -rotate-[6deg] flex items-center justify-center text-white text-[24px] font-bold">S</div>

    <!-- hand-drawn annotations -->
    <svg class="absolute left-0 top-0 w-[1366px] h-[768px] pointer-events-none" viewBox="0 0 1366 768" fill="none" stroke="#ff0000" stroke-width="3.500">
      <path d="M185 80C250 82 328 105 329 135C330 165 250 180 170 186C110 185 70 165 70 140C72 105 120 78 185 80Z"/>
      <path d="M115 198C160 202 188 218 188 236C187 258 140 270 90 272C50 272 15 250 14 228C14 210 60 195 115 198Z"/>
    </svg>
  </div>

  <script>
    // tree rows: [label, key, kind, icon], kind 0 closed folder, 1 open folder, 2 child, 3 last child, 4 selected child
    const rows = [
      ["常用构件类型", "", 1, "i-dopen"], ["轴网", "(J)", 2, "i-grid"], ["筏板基础", "(M)", 2, "i-raft"], ["框柱", "(Z)", 2, "i-col"],
      ["剪力墙", "(Q)", 2, "i-shear"], ["梁", "(L)", 2, "i-beam"], ["现浇板", "(B)", 3, "i-slab"], ["轴线", "", 0, "i-dclosed"],
      ["柱", "", 1, "i-dopen"], ["框柱", "(Z)", 4, "i-col"], ["暗柱", "(Z)", 2, "i-col"], ["端柱", "(Z)", 2, "i-col"],
      ["构造柱", "(Z)", 3, "i-ctor"], ["墙", "", 0, "i-dclosed"], ["门窗洞", "", 0, "i-dclosed"], ["梁", "", 0, "i-dclosed"],
      ["板", "", 0, "i-dclosed"], ["基础", "", 1, "i-dopen"], ["基础梁", "(F)", 2, "i-fbeam"], ["筏板基础", "(M)", 2, "i-raft"],
      ["集水坑", "(K)", 2, "i-pit"], ["柱墩", "(Y)", 2, "i-pier"], ["筏板主筋", "(R)", 2, "i-main"], ["筏板负筋", "(X)", 2, "i-neg"],
      ["独立基础", "(P)", 2, "i-ind"], ["条形基础", "(T)", 2, "i-strip"], ["桩承台", "(V)", 2, "i-cap"], ["承台梁", "(F)", 2, "i-fbeam"],
      ["桩", "(U)", 2, "i-pile"], ["基础板带", "(W)", 3, "i-band"], ["其它", "", 0, "i-dclosed"]
    ];
    const chevOpen = `<svg class="absolute left-[8px] top-[6px] w-[8px] h-[5px]" viewBox="0 0 10 6"><path d="M1 1l4 4 4-4" stroke="#555" stroke-width="1.800" fill="none"/></svg>`;
    const chevClosed = `<svg class="absolute left-[10px] top-[4px] w-[5px] h-[8px]" viewBox="0 0 6 10"><path d="M1 1l4 4-4 4" stroke="#a6a6a6" stroke-width="1.800" fill="none"/></svg>`;
    const spine = `<i class="absolute left-[12px] top-0 h-4 border-l border-dotted border-[#777]"></i>`;

    document.getElementById("tree").innerHTML = rows.map(([label, key, kind, icon]) => {
      if (kind < 2) {
        return `<div class="relative h-4 flex items-center whitespace-nowrap pt-px">
          <i class="absolute left-[20px] top-2 w-[3px] border-t border-dotted border-[#777]"></i>
          ${kind ? chevOpen : chevClosed}
          <svg class="absolute left-[23px] top-px w-[16px] h-[14px]"><use href="#${icon}"/></svg>
          <span class="ml-[44px] bg-white">${label}</span></div>`;
      }
      const branch = kind === 3 ? "h-2" : "h-4";
      const selected = kind === 4 ? "bg-[#d8d8d8]" : "";
      return `<div class="relative h-4 flex items-center whitespace-nowrap pt-px">${spine}
        <i class="absolute left-[31px] top-0 ${branch} border-l border-dotted border-[#777]"></i>
        <i class="absolute left-[32px] top-2 w-[10px] border-t border-dotted border-[#777]"></i>
        <span class="absolute left-[40px] top-0 w-[100px] h-4 ${selected}"></span>
        <svg class="absolute left-[43px] top-px w-[14px] h-[14px]"><use href="#${icon}"/></svg>
        <span class="relative ml-[63px]">${label}<span class="[font-family:'Liberation_Mono',monospace] text-[10px]">${key}</span></span></div>`;
    }).join("");
  </script>
</body>
</html>
